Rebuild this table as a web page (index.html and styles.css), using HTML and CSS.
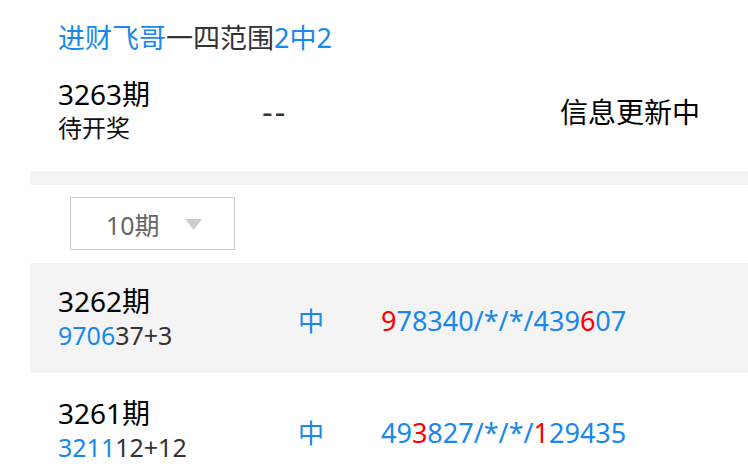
FILE: index.html
```html
<!DOCTYPE html>
<html lang="zh-CN">
<head>
  <meta charset="UTF-8">
  <title>进财飞哥一四范围2中2</title>
  <meta name="viewport" content="width=device-width, initial-scale=1.0">
  <link rel="stylesheet" href="styles.css">
</head>
<body>
  <div class="page">
    <div class="header">
      <h2 class="title"><span class="blue">进财飞哥</span>一四范围<span class="blue">2中2</span></h2>

      <div class="current">
        <div class="issue">
          <div class="issue-no">3263期</div>
          <div class="issue-sub">待开奖</div>
        </div>
        <div class="dash">--</div>
        <div class="status">信息更新中</div>
      </div>
    </div>

    <div class="divider"></div>

    <div class="filter">
      <div class="select">
        <span class="select-text">10期</span>
        <svg class="arrow" width="17" height="11" viewBox="0 0 17 11"><polygon points="0,0 17,0 8.5,11" fill="#cccccc"/></svg>
      </div>
    </div>

    <div class="list">
      <div class="row grey">
        <div class="issue">
          <div class="issue-no">3262期</div>
          <div class="issue-code"><span class="blue">9706</span>37+3</div>
        </div>
        <div class="hit">中</div>
        <div class="nums"><span class="red">9</span>78340/*/*/439<span class="red">6</span>07</div>
      </div>

      <div class="row">
        <div class="issue">
          <div class="issue-no">3261期</div>
          <div class="issue-code"><span class="blue">3211</span>12+12</div>
        </div>
        <div class="hit">中</div>
        <div class="nums">49<span class="red">3</span>827/*/*/<span class="red">1</span>29435</div>
      </div>
    </div>
  </div>
</body>
</html>
```

FILE: styles.css
```css
body {
  margin: 0;
  background-color: #fff;
  font-family: 'Noto Sans', 'Noto Sans CJK SC', sans-serif;
  color: #000;
  overflow: hidden;
}

.page {
  padding-left: 30px;
}

.blue {
  color: #1888ec;
}

.red {
  color: #ff0000;
}

.header {
  padding: 18px 0 27px 28px;
}

.title {
  margin: 0;
  font-size: 27px;
  font-weight: normal;
  line-height: 39px;
  color: #333;
}

.current {
  margin-top: 21px;
  height: 66px;
  display: grid;
  grid-template-columns: 204px 298px auto;
  align-items: center;
}

.issue-no {
  font-size: 28px;
  line-height: 33px;
  color: #000;
}

.issue-sub {
  font-size: 24px;
  line-height: 33px;
  color: #111;
}

.dash {
  font-size: 30px;
  color: #333;
  letter-spacing: 2px;
  transform: scaleX(1.1);
  transform-origin: left center;
}

.status {
  font-size: 28px;
  color: #000;
}

.divider {
  height: 14px;
  background-color: #f4f4f4;
}

.filter {
  padding: 12px 0 13px 40px;
}

.select {
  box-sizing: border-box;
  width: 165px;
  height: 53px;
  border: 1px solid #ccc;
  display: flex;
  align-items: center;
  padding-left: 35px;
}

.select-text {
  font-size: 25px;
  color: #666;
}

.arrow {
  margin-left: 25px;
  margin-top: 2px;
}

.row {
  height: 110px;
  margin-bottom: 2px;
  padding-left: 28px;
  display: grid;
  grid-template-columns: 240px 83px auto;
  align-items: center;
}

.row.grey {
  background-color: #f4f4f4;
}

.row .issue-no {
  line-height: 34px;
}

.issue-code {
  font-size: 25px;
  line-height: 34px;
  color: #333;
}

.hit {
  font-size: 26px;
  color: #1888ec;
  padding-top: 4px;
}

.nums {
  font-size: 27px;
  color: #1888ec;
  padding-top: 4px;
}
```
